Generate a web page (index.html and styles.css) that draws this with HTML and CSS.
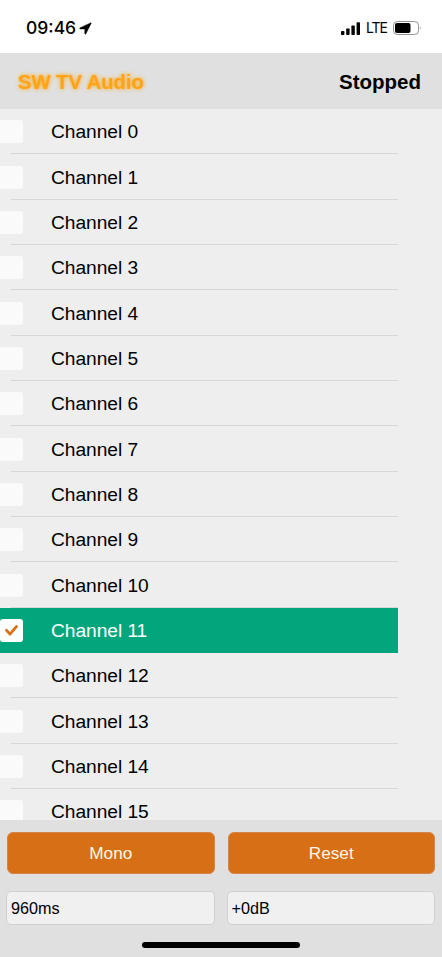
FILE: index.html
```
<!DOCTYPE html>
<html lang="en">
<head>
<meta charset="utf-8">
<title>SW TV Audio</title>
<link rel="stylesheet" href="styles.css">
</head>
<body>
<div class="status">
  <div class="clock"><span class="time">09:46</span>
    <svg class="location" width="13" height="13" viewBox="0 0 13 13"><path d="M12 .7.9 5.9q-.6.7.2 1h4.7v4.9q.4.9 1.1 0L12.3 1Z" stroke="#000" stroke-width=".5"/></svg>
  </div>
  <div class="signals">
    <svg width="20" height="13" viewBox="0 0 20 13"><rect x="0" y="9" width="3.4" height="4" rx=".7"/><rect x="5.2" y="6.5" width="3.4" height="6.5" rx=".7"/><rect x="10.4" y="3.5" width="3.4" height="9.5" rx=".7"/><rect x="15.6" y=".3" width="3.4" height="12.7" rx=".7"/></svg>
    <span class="network">LTE</span>
    <svg width="29" height="14" viewBox="0 0 29 14"><rect x=".5" y=".5" width="25" height="13" rx="3.8" fill="none" stroke="#929292"/><rect x="2" y="2" width="15.5" height="10" rx="2"/><path d="M27 5q1.5 2 0 4Z" fill="#929292"/></svg>
  </div>
</div>
<header class="header"><h1 class="title">SW TV Audio</h1><span class="state">Stopped</span></header>
<main class="list">
  <ul class="channels">
    <li class="channel"><i class="box"></i><span class="name">Channel 0</span></li>
    <li class="channel"><i class="box"></i><span class="name">Channel 1</span></li>
    <li class="channel"><i class="box"></i><span class="name">Channel 2</span></li>
    <li class="channel"><i class="box"></i><span class="name">Channel 3</span></li>
    <li class="channel"><i class="box"></i><span class="name">Channel 4</span></li>
    <li class="channel"><i class="box"></i><span class="name">Channel 5</span></li>
    <li class="channel"><i class="box"></i><span class="name">Channel 6</span></li>
    <li class="channel"><i class="box"></i><span class="name">Channel 7</span></li>
    <li class="channel"><i class="box"></i><span class="name">Channel 8</span></li>
    <li class="channel"><i class="box"></i><span class="name">Channel 9</span></li>
    <li class="channel"><i class="box"></i><span class="name">Channel 10</span></li>
    <li class="channel selected"><i class="box"><svg width="13" height="11" viewBox="0 0 13 11"><path d="M1.6 5.3 5 9.2 11.4 1.6" fill="none" stroke="#d66f15" stroke-width="2.8" stroke-linecap="round" stroke-linejoin="round"/></svg></i><span class="name">Channel 11</span></li>
    <li class="channel"><i class="box"></i><span class="name">Channel 12</span></li>
    <li class="channel"><i class="box"></i><span class="name">Channel 13</span></li>
    <li class="channel"><i class="box"></i><span class="name">Channel 14</span></li>
    <li class="channel"><i class="box"></i><span class="name">Channel 15</span></li>
  </ul>
</main>
<footer class="footer">
  <div class="controls">
    <button class="button">Mono</button>
    <button class="button">Reset</button>
    <div class="field">960ms</div>
    <div class="field">+0dB</div>
  </div>
  <div class="home"></div>
</footer>
</body>
</html>
```
FILE: styles.css
```
* { box-sizing: border-box; }
body {
  margin: 0;
  width: 442px;
  height: 957px;
  overflow: hidden;
  display: flex;
  flex-direction: column;
  background: #eee;
  color: #000;
  font-family: "Liberation Sans", Arial, sans-serif;
}
svg { display: block; flex: none; }
.status {
  height: 53px;
  flex: none;
  display: flex;
  justify-content: space-between;
  align-items: center;
  padding: 3px 20px 0 26px;
  background: #fff;
}
.clock, .signals { display: flex; align-items: center; }
.clock { gap: 3px; }
.signals { gap: 5px; }
.time { font: 500 17.5px/20px Inter, sans-serif; }
.network { font: 400 14px/18px Inter, sans-serif; letter-spacing: -1px; margin-right: 1px; }
.header {
  height: 56px;
  flex: none;
  display: flex;
  justify-content: space-between;
  align-items: center;
  padding: 2px 21px 0 18px;
  background: #e0e0e0;
}
.title {
  margin: 0;
  font-size: 20.5px;
  line-height: 24px;
  letter-spacing: -0.2px;
  color: #ffa319;
  text-shadow: 0 0 4px #ffa500;
}
.state { font-size: 20.5px; line-height: 24px; font-weight: bold; }
.list { flex: 1; min-height: 0; overflow: hidden; }
.channels { margin: 0; padding: 0; width: 398px; list-style: none; }
.channel {
  height: 45.35px;
  display: flex;
  align-items: center;
  background: linear-gradient(#d6d7dc, #d6d7dc) 11px 100% / 387px 1px no-repeat;
}
.channel.selected { background: #03a67c; color: #fff; }
.box {
  width: 23px;
  height: 23px;
  margin-right: 28px;
  flex: none;
  display: flex;
  align-items: center;
  justify-content: center;
  border-radius: 0 3px 3px 0;
  background: #fbfafb;
}
.selected .box { border-radius: 3px; background: #fff; }
.name { font-size: 19.2px; line-height: 24px; letter-spacing: -0.05px; padding-top: 1px; }
.footer {
  height: 137px;
  flex: none;
  display: flex;
  flex-direction: column;
  align-items: center;
  justify-content: space-between;
  padding: 12px 7px 9px;
  background: #e0e0e0;
}
.controls {
  width: 100%;
  display: grid;
  grid-template-columns: 1fr 1fr;
  gap: 17px 13px;
}
.button {
  height: 42px;
  padding: 0;
  border: 1px solid #d5844a;
  border-radius: 6px;
  background: #d66f15;
  color: #fff8ea;
  font: 17.2px "Liberation Sans", Arial, sans-serif;
}
.field {
  height: 34px;
  margin: 0 0 0 -1px;
  padding: 0 4px;
  border: 1px solid #d0d0d0;
  border-radius: 5px;
  background: #f0f0f0;
  font-size: 16.2px;
  line-height: 33px;
}
.home { width: 158px; height: 6px; border-radius: 3px; background: #000; }
```
